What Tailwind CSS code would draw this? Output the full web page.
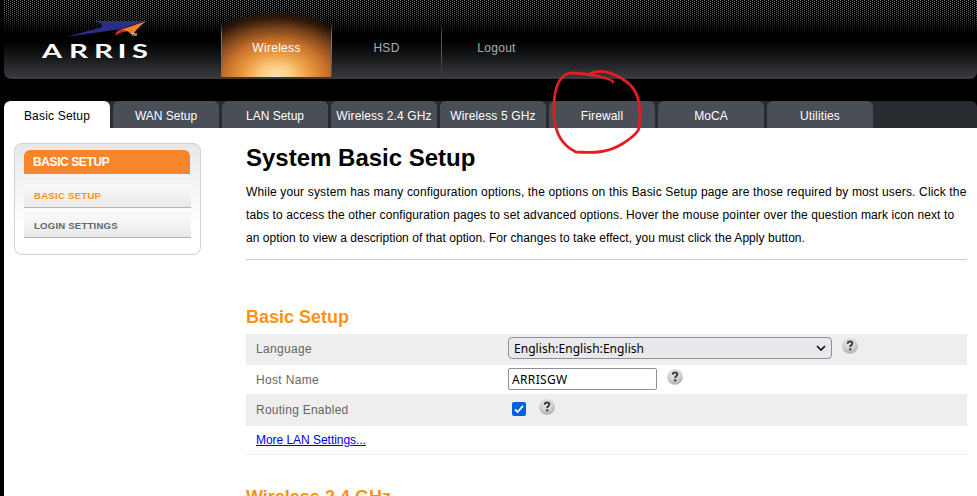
<!DOCTYPE html>
<html lang="en">
<head>
<meta charset="utf-8">
<title>System Basic Setup</title>
<script src="https://cdn.jsdelivr.net/npm/@tailwindcss/browser@4"></script>
</head>
<body class="w-[977px] h-[496px] overflow-hidden bg-black pl-1 relative font-['Liberation_Sans',Arial,sans-serif] text-[12px] text-black">
<svg class="absolute w-0 h-0">
  <defs>
    <radialGradient id="ball" cx="45%" cy="30%" r="70%"><stop offset="0" stop-color="#ececec"/><stop offset=".6" stop-color="#d0d0d0"/><stop offset="1" stop-color="#adadad"/></radialGradient>
    <symbol id="help" viewBox="0 0 16 16"><circle cx="8" cy="8" r="7.8" fill="url(#ball)"/><path d="M5.7 5.7C5.8 4.1 6.8 3.5 8.1 3.5c1.4 0 2.2.7 2.2 1.8 0 1.7-2.1 1.7-2.1 3.7" fill="none" stroke="#3c3c3c" stroke-width="2"/><rect x="7.1" y="10.3" width="2.2" height="2.1" fill="#3c3c3c"/></symbol>
  </defs>
</svg>

<header class="relative h-[79px] flex rounded-b-[7px] overflow-hidden bg-[linear-gradient(to_bottom,#000_0,#000_42px,#3a3c41_79px)]">
  <svg class="absolute left-0 top-0 w-full h-[34px]">
    <defs>
      <pattern id="dots" width="4" height="2" patternUnits="userSpaceOnUse"><rect x="0" y="0" width="1" height="1" fill="#72767c"/><rect x="2" y="1" width="1" height="1" fill="#72767c"/></pattern>
      <linearGradient id="fade" x2="0" y2="1"><stop offset="0" stop-color="#fff"/><stop offset=".4" stop-color="#ccc"/><stop offset="1" stop-color="#000"/></linearGradient>
      <mask id="dotmask"><rect width="100%" height="34" fill="url(#fade)"/></mask>
    </defs>
    <rect width="100%" height="34" fill="url(#dots)" mask="url(#dotmask)"/>
  </svg>
  <div class="relative w-[217px] shrink-0 pl-[37px] pt-5">
    <svg width="112" height="42" viewBox="0 0 112 42" role="img" aria-label="ARRIS">
      <path d="M25 17L60 7.5Q65 4 52 1H105L80 9Z" fill="#2c2d86"/>
      <path d="M105 1.3L79 10L86 11L92 15Q95 9 105 1.3Z" fill="#f58025"/>
      <path d="M74.5 16Q74 10.5 80 9.5L86 11.5Q78 12 74.5 16Z" fill="#dc1f3c"/>
      <text x="90" y="16" font-size="4" fill="#ddd" font-weight="700">TM</text>
      <g font-family="Lato, sans-serif" font-weight="700" font-size="19" fill="#fff">
        <text x="1" y="37.5" textLength="20" lengthAdjust="spacingAndGlyphs">A</text>
        <text x="28" y="37.5" textLength="19" lengthAdjust="spacingAndGlyphs">R</text>
        <text x="53" y="37.5" textLength="19" lengthAdjust="spacingAndGlyphs">R</text>
        <text x="76.5" y="37.5" textLength="9" lengthAdjust="spacingAndGlyphs">I</text>
        <text x="91" y="37.5" textLength="16" lengthAdjust="spacingAndGlyphs">S</text>
      </g>
    </svg>
  </div>
  <nav class="relative flex h-[77px] text-[#a9aeb6] leading-[15px]">
    <a class="relative w-[111px] pt-[41px] text-center text-white tracking-[0.3px] bg-[radial-gradient(ellipse_96px_67px_at_50%_100%,#ffe4b5_0,#fbc97f_18%,#e9983f_36%,#c66f2a_54%,#74401a_74%,#301908_88%,transparent_100%)]">Wireless
      <span class="absolute left-0 top-[22px] w-px h-[55px] bg-[linear-gradient(to_bottom,transparent,#77716b_25%,#77716b_50%,transparent)]"></span>
      <span class="absolute right-0 top-[22px] w-px h-[55px] bg-[linear-gradient(to_bottom,transparent,#77716b_25%,#77716b_50%,#55443a)]"></span>
    </a>
    <a class="w-[109px] pt-[41px] text-center tracking-[0.3px]">HSD</a>
    <span class="w-px h-[54px] mt-[23px] bg-[linear-gradient(to_bottom,transparent,#57595d_25%,#57595d_60%,transparent)]"></span>
    <a class="w-[109px] pt-[41px] text-center tracking-[0.3px]">Logout</a>
  </nav>
</header>

<div class="mt-[22px] h-[27px] flex gap-[3px] rounded-t-[6px] bg-[#282b30] text-white text-center leading-[30px] whitespace-nowrap overflow-hidden">
  <a class="w-[106px] rounded-t-[6px] bg-white text-black tracking-[0.2px]">Basic Setup</a>
  <a class="w-[106px] rounded-t-[6px] bg-[#4a4e57]">WAN Setup</a>
  <a class="w-[106px] rounded-t-[6px] bg-[#4a4e57]">LAN Setup</a>
  <a class="w-[106px] rounded-t-[6px] bg-[#4a4e57] tracking-[0.12px]">Wireless 2.4 GHz</a>
  <a class="w-[106px] rounded-t-[6px] bg-[#4a4e57] tracking-[0.15px]">Wireless 5 GHz</a>
  <a class="w-[106px] rounded-t-[6px] bg-[#4a4e57] tracking-[0.15px]">Firewall</a>
  <a class="w-[106px] rounded-t-[6px] bg-[#4a4e57]">MoCA</a>
  <a class="w-[106px] rounded-t-[6px] bg-[#4a4e57] tracking-[0.15px]">Utilities</a>
</div>

<div class="bg-white h-[368px] flex">
  <aside class="ml-[10px] mt-[15px] w-[187px] h-[112px] shrink-0 rounded-[8px] border border-[#d0d0d0] bg-[linear-gradient(to_bottom,#e8e8e8,#fff_80px)] pt-[6px] pl-[9px] font-bold">
    <h3 class="w-[166px] h-6 rounded-t-[6px] bg-[#f88529] text-white pl-[9px] leading-[24px] text-[12px] tracking-[-0.4px]">BASIC SETUP</h3>
    <a class="mt-[9px] block w-[167px] h-[25px] border-b border-[#b4b4b4] border-t border-t-[#eee] bg-[linear-gradient(to_bottom,#fafafa,#e9e9e9)] pl-[10px] leading-[24px] text-[9.6px] tracking-[0.25px] text-[#ff9310]">BASIC SETUP</a>
    <a class="mt-[5px] block w-[167px] h-[25px] border-b border-[#b4b4b4] border-t border-t-[#eee] bg-[linear-gradient(to_bottom,#fafafa,#e9e9e9)] pl-[10px] leading-[24px] text-[9.6px] tracking-[0.2px] text-[#666]">LOGIN SETTINGS</a>
  </aside>

  <main class="ml-[45px] w-[721px] shrink-0">
    <h1 class="mt-[16px] h-[28px] leading-[28px] text-[24px] font-bold">System Basic Setup</h1>
    <p class="mt-[9px] h-[79px] border-b border-[#ccc] leading-[23px] whitespace-nowrap"><span class="tracking-[0.155px]">While your system has many configuration options, the options on this Basic Setup page are those required by most users. Click the</span><br><span class="tracking-[0.112px]">tabs to access the other configuration pages to set advanced options. Hover the mouse pointer over the question mark icon next to</span><br><span class="tracking-[0.045px]">an option to view a description of that option. For changes to take effect, you must click the Apply button.</span></p>
    <h2 class="mt-[45px] h-[29px] leading-[24px] text-[18px] font-bold text-[#ff9310]">Basic Setup</h2>
    <div class="text-[#666]">
      <div class="h-[31px] bg-[#eee] flex items-start pl-[10px]">
        <span class="w-[252px] leading-[30px] tracking-[0.33px]">Language</span>
        <button class="mt-[3px] w-[324px] h-[22px] rounded-[4px] border border-[#8f8f9d] bg-[#e9e9ed] flex items-center justify-between pl-[5px] pr-[5px] font-['Noto_Sans',sans-serif] text-[12px] tracking-[0.05px] text-black"><span class="pt-px">English:English:English</span><svg width="10" height="6" viewBox="0 0 10 6" fill="none" stroke="#111" stroke-width="1.7"><path d="M1 1l4 4 4-4"/></svg></button>
        <svg class="ml-[10px] mt-1 w-4 h-4"><use href="#help"/></svg>
      </div>
      <div class="h-[29px] flex items-start pl-[10px]">
        <span class="w-[252px] leading-[31px] tracking-[0.33px]">Host Name</span>
        <input class="mt-[3px] w-[149px] h-[22px] rounded-[2px] border border-[#8f8f9d] bg-white pl-[3px] font-['Noto_Sans',sans-serif] text-[12px] tracking-[0.35px] text-black" value="ARRISGW">
        <svg class="ml-[10px] mt-1 w-4 h-4"><use href="#help"/></svg>
      </div>
      <div class="h-[32px] bg-[#eee] flex items-start pl-[10px]">
        <span class="w-[256px] leading-[32px] tracking-[0.25px]">Routing Enabled</span>
        <span class="mt-[8px] w-[14px] h-[14px] rounded-[2px] bg-[#0060df] flex items-center justify-center"><svg width="12" height="12" viewBox="0 0 12 12" fill="none" stroke="#fff" stroke-width="1.9"><path d="M2 6.5L4.7 9L10 2.8"/></svg></span>
        <svg class="ml-[13px] mt-[5px] w-4 h-4"><use href="#help"/></svg>
      </div>
      <div class="h-[29px] border-b border-[#eee] pl-[10px] leading-[28px]"><a class="underline text-[#0000ee] tracking-[-0.04px]">More LAN Settings...</a></div>
    </div>
    <h2 class="mt-[30px] leading-[24px] text-[18px] font-bold text-[#ff9310]">Wireless 2.4 GHz</h2>
  </main>
</div>

<svg class="absolute left-[548px] top-[66px]" width="100" height="92" viewBox="0 0 100 92" fill="none" stroke="#e21e20" stroke-width="2.8" stroke-linecap="round" stroke-linejoin="round">
  <path d="M65 16C64 12 38 7 22 7C9 10 5 25 6 49C7 67 15 80 28 86C45 87 60 87 74 78C82 73 90 67 91 62C94 41 91 23 76 14C66 7 53 3 43 7"/>
</svg>
</body>
</html>
